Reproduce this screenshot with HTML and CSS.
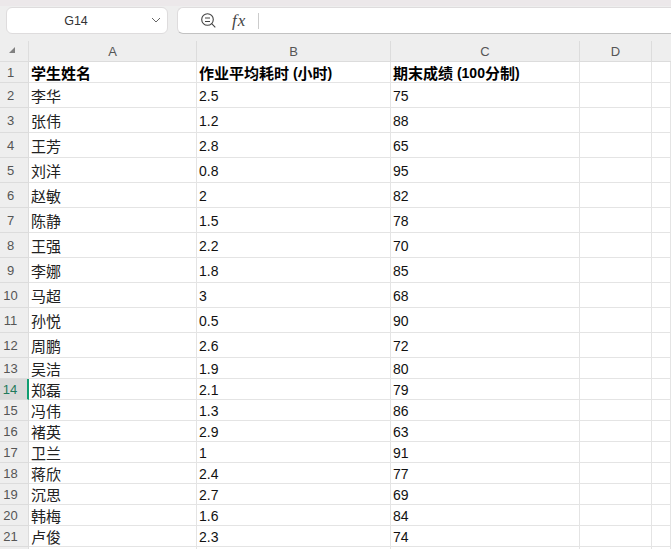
FILE: index.html
```html
<!DOCTYPE html>
<html lang="zh">
<head>
    <meta charset="UTF-8">
    <meta name="viewport" content="width=device-width, initial-scale=1.0">
    <title>学生成绩表</title>
    <link rel="stylesheet" href="styles.css">
</head>
<body>
    <div class="topband"></div>
    <div class="formula-bar">
        <div class="name-box">
            <span class="cell-ref">G14</span>
            <svg class="chevron" width="10" height="6" viewBox="0 0 10 6"><path d="M1 1l4 4 4-4" fill="none" stroke="#666" stroke-width="1"/></svg>
        </div>
        <div class="formula-box">
            <svg class="zoom-icon" width="17" height="17" viewBox="0 0 17 17"><circle cx="6.5" cy="7.5" r="5.8" fill="none" stroke="#444" stroke-width="1.1"/><path d="M4 6h5M4 9.5h5M10.7 11.7l3.6 3.6" fill="none" stroke="#444" stroke-width="1.1"/></svg>
            <span class="fx"><i>f</i><i>x</i></span>
            <span class="fx-sep"></span>
        </div>
    </div>
    <div class="sheet">
        <div class="corner"><span class="corner-mark"></span></div>
        <div class="col-head">A</div>
        <div class="col-head">B</div>
        <div class="col-head">C</div>
        <div class="col-head">D</div>
        <div class="col-head col-rest"></div>

        <div class="row-head">1</div><div class="cell bold name">学生姓名</div><div class="cell bold"><span class="han">作业平均耗时</span>&nbsp;(<span class="han">小时</span>)</div><div class="cell bold"><span class="han">期末成绩</span>&nbsp;(100<span class="han">分制</span>)</div><div class="cell"></div><div class="cell"></div>
        <div class="row-head">2</div><div class="cell name">李华</div><div class="cell">2.5</div><div class="cell">75</div><div class="cell"></div><div class="cell"></div>
        <div class="row-head">3</div><div class="cell name">张伟</div><div class="cell">1.2</div><div class="cell">88</div><div class="cell"></div><div class="cell"></div>
        <div class="row-head">4</div><div class="cell name">王芳</div><div class="cell">2.8</div><div class="cell">65</div><div class="cell"></div><div class="cell"></div>
        <div class="row-head">5</div><div class="cell name">刘洋</div><div class="cell">0.8</div><div class="cell">95</div><div class="cell"></div><div class="cell"></div>
        <div class="row-head">6</div><div class="cell name">赵敏</div><div class="cell">2</div><div class="cell">82</div><div class="cell"></div><div class="cell"></div>
        <div class="row-head">7</div><div class="cell name">陈静</div><div class="cell">1.5</div><div class="cell">78</div><div class="cell"></div><div class="cell"></div>
        <div class="row-head">8</div><div class="cell name">王强</div><div class="cell">2.2</div><div class="cell">70</div><div class="cell"></div><div class="cell"></div>
        <div class="row-head">9</div><div class="cell name">李娜</div><div class="cell">1.8</div><div class="cell">85</div><div class="cell"></div><div class="cell"></div>
        <div class="row-head">10</div><div class="cell name">马超</div><div class="cell">3</div><div class="cell">68</div><div class="cell"></div><div class="cell"></div>
        <div class="row-head">11</div><div class="cell name">孙悦</div><div class="cell">0.5</div><div class="cell">90</div><div class="cell"></div><div class="cell"></div>
        <div class="row-head">12</div><div class="cell name">周鹏</div><div class="cell">2.6</div><div class="cell">72</div><div class="cell"></div><div class="cell"></div>
        <div class="row-head">13</div><div class="cell name">吴洁</div><div class="cell">1.9</div><div class="cell">80</div><div class="cell"></div><div class="cell"></div>
        <div class="row-head active">14</div><div class="cell name">郑磊</div><div class="cell">2.1</div><div class="cell">79</div><div class="cell"></div><div class="cell"></div>
        <div class="row-head">15</div><div class="cell name">冯伟</div><div class="cell">1.3</div><div class="cell">86</div><div class="cell"></div><div class="cell"></div>
        <div class="row-head">16</div><div class="cell name">褚英</div><div class="cell">2.9</div><div class="cell">63</div><div class="cell"></div><div class="cell"></div>
        <div class="row-head">17</div><div class="cell name">卫兰</div><div class="cell">1</div><div class="cell">91</div><div class="cell"></div><div class="cell"></div>
        <div class="row-head">18</div><div class="cell name">蒋欣</div><div class="cell">2.4</div><div class="cell">77</div><div class="cell"></div><div class="cell"></div>
        <div class="row-head">19</div><div class="cell name">沉思</div><div class="cell">2.7</div><div class="cell">69</div><div class="cell"></div><div class="cell"></div>
        <div class="row-head">20</div><div class="cell name">韩梅</div><div class="cell">1.6</div><div class="cell">84</div><div class="cell"></div><div class="cell"></div>
        <div class="row-head">21</div><div class="cell name">卢俊</div><div class="cell">2.3</div><div class="cell">74</div><div class="cell"></div><div class="cell"></div>
        <div class="row-head"></div><div class="cell"></div><div class="cell"></div><div class="cell"></div><div class="cell"></div><div class="cell"></div>
    </div>
</body>
</html>
```

FILE: styles.css
```css
body {
    margin: 0;
    height: 549px;
    overflow: hidden;
    background-color: #fff;
    font-family: "Liberation Sans", "Noto Sans CJK SC", sans-serif;
    color: #111;
}
.topband {
    height: 6px;
    background-color: #ece8ea;
}
.formula-bar {
    display: flex;
    gap: 9px;
    height: 35px;
    padding: 1px 0 0 6px;
    box-sizing: border-box;
    background-color: #eeeeee;
}
.name-box,
.formula-box {
    display: flex;
    align-items: center;
    height: 27px;
    background-color: #fff;
    border: 1px solid #dedcdd;
    border-radius: 6px;
    box-sizing: border-box;
}
.name-box {
    width: 162px;
    position: relative;
    justify-content: center;
}
.cell-ref {
    font-size: 12.5px;
    color: #333;
    margin-right: 22px;
}
.chevron {
    position: absolute;
    right: 6px;
    top: 9px;
}
.formula-box {
    flex: 1;
    padding-left: 23px;
    border-right: none;
    border-bottom-color: #c2c2c2;
    border-radius: 6px 0 0 6px;
}
.fx {
    font-family: "Liberation Serif", serif;
    font-size: 17px;
    letter-spacing: 1px;
    color: #444;
    margin-left: 14px;
}
.fx-sep {
    width: 1px;
    height: 16px;
    background-color: #ccc;
    margin-left: 12px;
}
.sheet {
    display: grid;
    grid-template-columns: 29px 168px 194px 189px 72px 19px;
    grid-template-rows: 21px 21px repeat(11, 25px) repeat(10, 21px) 3px;
    font-size: 14px;
}
.corner,
.col-head,
.row-head {
    background-color: #eeeeee;
    color: #555;
    box-sizing: border-box;
}
.corner {
    display: flex;
    align-items: center;
    justify-content: center;
    padding: 0 5px 2px 0;
    border-bottom: 1px solid #ddd;
    border-right: 1px solid #ddd;
}
.corner-mark {
    width: 0;
    height: 0;
    border-left: 6px solid transparent;
    border-bottom: 6px solid #808080;
}
.col-head {
    display: flex;
    align-items: center;
    justify-content: center;
    font-size: 13px;
    border-right: 1px solid #dcdcdc;
    border-bottom: 1px solid #dcdcdc;
}
.col-rest {
    border-right: none;
}
.row-head {
    display: flex;
    align-items: center;
    justify-content: center;
    font-size: 13px;
    padding-right: 7px;
    border-right: 1px solid #dcdcdc;
    border-bottom: 1px solid #dcdcdc;
}
.row-head.active {
    background-color: #d9d9d9;
    color: #1f7a5c;
    border-right: 2px solid #0f9d70;
}
.cell {
    display: flex;
    align-items: center;
    padding: 1px 2px 0;
    white-space: nowrap;
    box-sizing: border-box;
    border-right: 1px solid #e4e4e4;
    border-bottom: 1px solid #e4e4e4;
}
.name,
.han {
    font-size: 15px;
}
.name {
    color: #222;
}
.bold {
    font-weight: 700;
    color: #000;
}
```
